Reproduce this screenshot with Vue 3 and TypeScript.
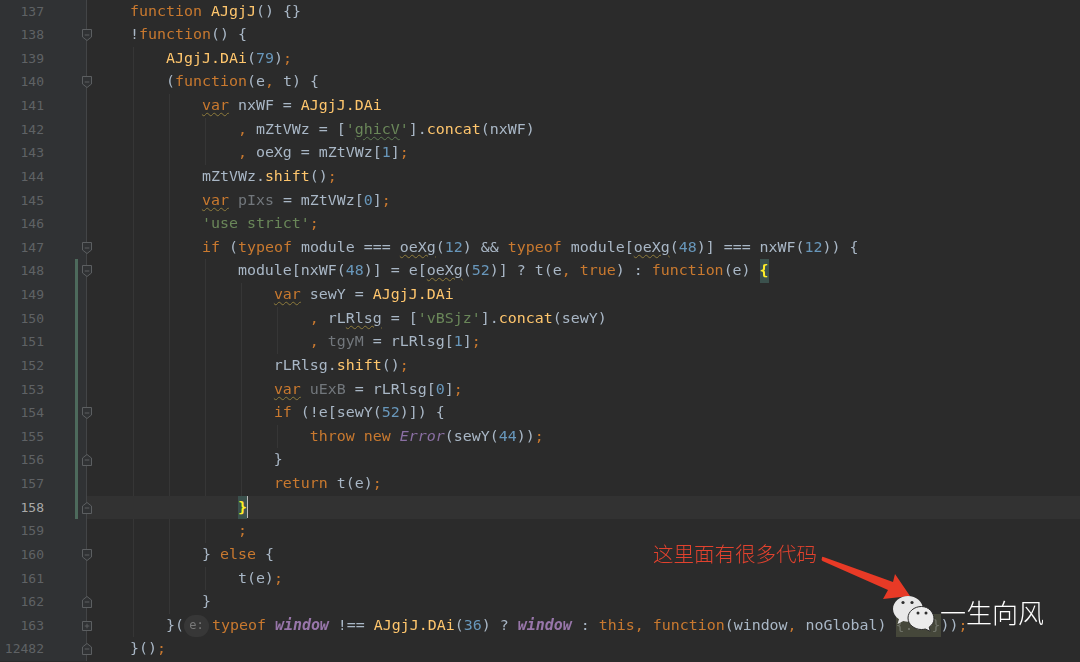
<script setup lang="ts">
interface Token { c: string; t: string }
interface Row { n: string; code: Token[]; fold: string; changed: boolean; current: boolean; guides: number[]; pill?: boolean }

// ⟦class|text⟧ marks a coloured token; everything else is plain text
const source: [string, string, string][] = [
  ['137', '', '    ⟦k|function⟧ ⟦f|AJgjJ⟧() {}'],
  ['138', 'open', '    !⟦k|function⟧() {'],
  ['139', '', '        ⟦f|AJgjJ.DAi⟧(⟦n|79⟧)⟦k|;⟧'],
  ['140', 'open', '        (⟦k|function⟧(e⟦k|,⟧ t) {'],
  ['141', '', '            ⟦kw|var⟧ nxWF = ⟦f|AJgjJ.DAi⟧'],
  ['142', '', '                ⟦k|,⟧ mZtVWz = [⟦s|\'⟧⟦sw|ghicV⟧⟦s|\'⟧].⟦f|concat⟧(nxWF)'],
  ['143', '', '                ⟦k|,⟧ oeXg = mZtVWz[⟦n|1⟧]⟦k|;⟧'],
  ['144', '', '            mZtVWz.⟦f|shift⟧()⟦k|;⟧'],
  ['145', '', '            ⟦kw|var⟧ ⟦u|pIxs⟧ = mZtVWz[⟦n|0⟧]⟦k|;⟧'],
  ['146', '', "            ⟦s|'use strict'⟧⟦k|;⟧"],
  ['147', 'open', '            ⟦k|if⟧ (⟦k|typeof⟧ module === ⟦w|oeXg⟧(⟦n|12⟧) && ⟦k|typeof⟧ module[⟦w|oeXg⟧(⟦n|48⟧)] === nxWF(⟦n|12⟧)) {'],
  ['148', 'open', '                module[nxWF(⟦n|48⟧)] = e[⟦w|oeXg⟧(⟦n|52⟧)] ? t(e⟦k|,⟧ ⟦k|true⟧) : ⟦k|function⟧(e) ⟦b|{⟧'],
  ['149', '', '                    ⟦kw|var⟧ sewY = ⟦f|AJgjJ.DAi⟧'],
  ['150', '', '                        ⟦k|,⟧ rL⟦w|Rlsg⟧ = [⟦s|\'vBSjz\'⟧].⟦f|concat⟧(sewY)'],
  ['151', '', '                        ⟦k|,⟧ ⟦u|tgyM⟧ = rLRlsg[⟦n|1⟧]⟦k|;⟧'],
  ['152', '', '                    rLRlsg.⟦f|shift⟧()⟦k|;⟧'],
  ['153', '', '                    ⟦kw|var⟧ ⟦u|uExB⟧ = rLRlsg[⟦n|0⟧]⟦k|;⟧'],
  ['154', 'open', '                    ⟦k|if⟧ (!e[sewY(⟦n|52⟧)]) {'],
  ['155', '', '                        ⟦k|throw⟧ ⟦k|new⟧ ⟦e|Error⟧(sewY(⟦n|44⟧))⟦k|;⟧'],
  ['156', 'close', '                    }'],
  ['157', '', '                    ⟦k|return⟧ t(e)⟦k|;⟧'],
  ['158', 'close', '                ⟦b|}⟧'],
  ['159', '', '                ⟦k|;⟧'],
  ['160', 'open', '            } ⟦k|else⟧ {'],
  ['161', '', '                t(e)⟦k|;⟧'],
  ['162', 'close', '            }'],
  ['163', 'plus', '        }(⟦pill|e:⟧⟦k|typeof⟧ ⟦g|window⟧ !== ⟦f|AJgjJ.DAi⟧(⟦n|36⟧) ? ⟦g|window⟧ : ⟦k|this,⟧ ⟦k|function⟧(window⟦k|,⟧ noGlobal) ⟦z|{...}⟧))⟦k|;⟧'],
  ['12482', 'close', '    }()⟦k|;⟧'],
]

const guideRanges: [number, number, number][] = [
  [133, 139, 163], [169, 141, 162], [205, 142, 143], [205, 148, 159],
  [205, 161, 161], [241, 149, 157], [277, 150, 151], [277, 155, 155],
]

function tokenize(s: string): Token[] {
  const out: Token[] = []
  const re = /⟦(\w+)\|([^⟧]*)⟧/g
  let last = 0
  let m: RegExpExecArray | null
  while ((m = re.exec(s))) {
    if (m.index > last) out.push({ c: 'p', t: s.slice(last, m.index) })
    out.push({ c: m[1], t: m[2] })
    last = m.index + m[0].length
  }
  if (last < s.length) out.push({ c: 'p', t: s.slice(last) })
  return out
}

const rows: Row[] = source.map(([n, fold, text]) => {
  const num = Number(n)
  return {
    n,
    fold,
    code: tokenize(text),
    changed: num >= 148 && num <= 158,
    current: num === 158,
    guides: num === 158 ? [] : guideRanges.filter(g => num >= g[1] && num <= g[2]).map(g => g[0]),
  }
})
</script>

<template>
  <div class="screen">
    <div class="editor">
      <div v-for="r in rows" :key="r.n" class="row" :class="{ current: r.current }">
        <div class="gutter">
          <span class="num">{{ r.n }}</span>
          <span class="bar" :class="{ on: r.changed }"></span>
          <svg v-if="r.fold" class="fold" viewBox="0 0 12 14" width="12" height="14">
            <path v-if="r.fold === 'open'" d="M1.5 1.5h9v7.5L6 12.5 1.5 9z" />
            <path v-else-if="r.fold === 'close'" d="M1.5 12.5h9V5L6 1.5 1.5 5z" />
            <path v-else d="M1.5 2.5h9v9h-9z" />
            <path d="M3.7 7h4.6" />
            <path v-if="r.fold === 'plus'" d="M6 4.7v4.6" />
          </svg>
        </div>
        <div class="code">
          <i v-for="g in r.guides" :key="g" class="guide" :style="{ left: g + 'px' }"></i>
          <span v-for="(t, i) in r.code" :key="i" :class="t.c">{{ t.t }}</span>
          <i v-if="r.current" class="caret"></i>
        </div>
      </div>
    </div>

    <div class="note">这里面有很多代码</div>
    <svg class="arrow" viewBox="0 0 100 50" width="100" height="50">
      <path d="M2 2.500 Q2 1.500 3.500 2 L73 27 L75 19 L90 41 L63 44 L68 35 L2.500 6 Q1 5 2 2.500z" fill="#e83a26" />
    </svg>
    <svg class="wechat" viewBox="0 0 44 44" width="44" height="44">
      <path d="M16 1C8 1 1 6.800 1 14c0 4.300 2.400 7.800 6 10.200L5.500 29l5.800-2.900c1.500.4 3.100.6 4.700.6 8 0 15-5.600 15-12.700S24 1 16 1z" fill="#e8e8e8" />
      <circle cx="11" cy="7.500" r="1.600" fill="#2e2e2e" />
      <circle cx="20" cy="7.500" r="1.600" fill="#2e2e2e" />
      <path d="M29.500 11.500C22.300 11.500 16 16.500 16 23s6.300 11.500 13.500 11.500c1.300 0 2.600-.2 3.800-.5l5 2.300-1.100-4.200c2.900-2.100 4.800-5 4.800-8.100 0-6.500-5.300-12.500-12.500-12.500z" fill="#ececec" stroke="#2b2b2b" stroke-width="1" />
      <circle cx="26" cy="18" r="1.500" fill="#2e2e2e" />
      <circle cx="34" cy="18" r="1.500" fill="#2e2e2e" />
    </svg>
    <div class="brand">一生向风</div>
  </div>
</template>

<style scoped>
.screen {
  position: relative;
  width: 1080px;
  height: 662px;
  overflow: hidden;
  background: #2b2b2b;
}
.editor {
  display: flex;
  flex-direction: column;
  margin-top: -0.5px;
  font-family: "DejaVu Sans Mono", "Liberation Mono", monospace;
  font-size: 14.95px;
  filter: blur(0.35px);
}
.row {
  display: flex;
  height: 23.63px;
  line-height: 23.63px;
  flex: none;
}
.gutter {
  position: relative;
  z-index: 1;
  display: flex;
  flex: none;
  width: 87px;
  background: #303234;
  border-right: 1px solid #434547;
  box-sizing: border-box;
}
.num {
  width: 44px;
  text-align: right;
  font-size: 13px;
  color: #5f6265;
}
.current .num { color: #a9a9a9; }
.bar {
  width: 2.500px;
  margin-left: 31px;
}
.bar.on { background: #4d6a5c; }
.fold {
  position: absolute;
  right: -6.500px;
  top: 5px;
  fill: #303234;
  stroke: #5c5f61;
  stroke-width: 1;
}
.code {
  position: relative;
  flex: 1;
  display: flex;
  align-items: center;
  padding-left: 7px;
  white-space: pre;
  color: #a9b7c6;
}
.current .code { background: #323232; }
.guide {
  position: absolute;
  top: 0;
  bottom: 0;
  width: 1px;
  margin-left: -87px;
  background: #363636;
}
.p { color: #a9b7c6; }
.k { color: #c9792f; }
.f { color: #ffc66d; }
.n { color: #6897bb; }
.s { color: #6a8759; }
.sw {
  color: #6a8759;
  text-decoration: underline wavy #5f7d54 1px;
  text-underline-offset: 2px;
}
.u { color: #72777c; }
.e { color: #8a6fa3; font-style: italic; }
.g { color: #9876aa; font-style: italic; font-weight: 700; }
.kw, .w {
  text-decoration: underline wavy #8f7c3c 1px;
  text-underline-offset: 2px;
}
.kw { color: #c9792f; }
.w { color: #a9b7c6; }
.b {
  color: #ffef28;
  background: #3b514d;
  font-weight: 700;
}
.z {
  color: #6f7268;
  background: #45473a;
}
.pill {
  display: block;
  width: 25px;
  height: 22px;
  line-height: 21px;
  margin-right: 3px;
  text-align: center;
  font-size: 12px;
  color: #7a7a7a;
  background: #373737;
  border-radius: 11px;
}
.caret {
  width: 1.500px;
  height: 22px;
  background: #bbbbbb;
}
.note {
  position: absolute;
  left: 653px;
  top: 539px;
  font-family: "Noto Sans CJK SC", sans-serif;
  font-size: 20.500px;
  line-height: 28px;
  font-weight: 300;
  color: #e2422e;
  white-space: nowrap;
}
.arrow {
  position: absolute;
  left: 820px;
  top: 555px;
}
.wechat {
  position: absolute;
  left: 892px;
  top: 595px;
}
.brand {
  position: absolute;
  left: 940px;
  top: 593px;
  font-family: "Noto Sans CJK SC", sans-serif;
  font-size: 26px;
  line-height: 38px;
  font-weight: 300;
  color: #ffffff;
  white-space: nowrap;
}
</style>
